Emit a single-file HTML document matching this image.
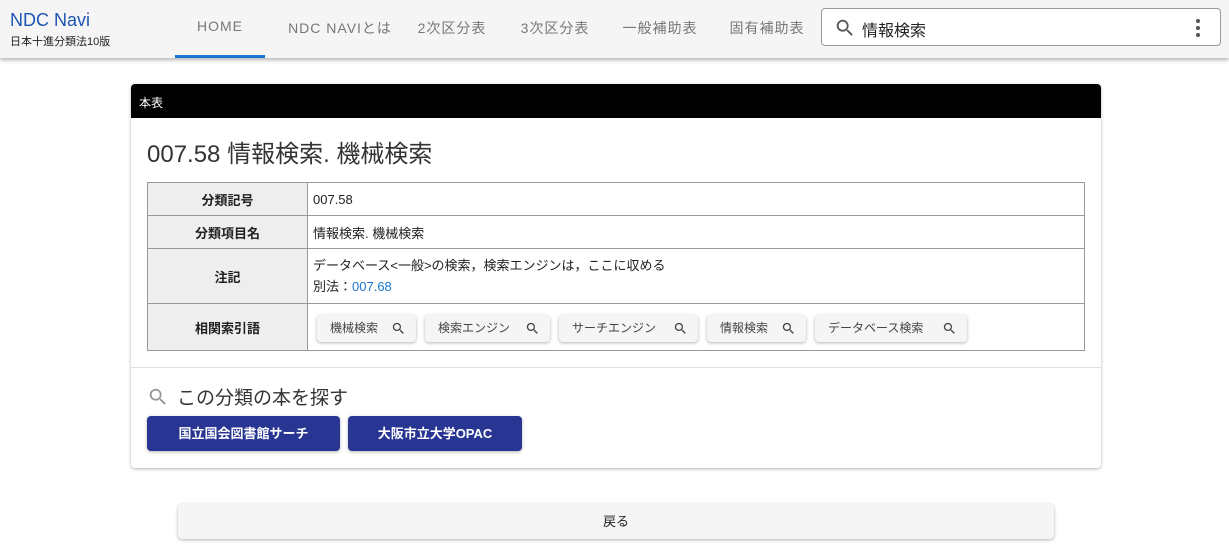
<!DOCTYPE html><html><head><meta charset="utf-8"><style>
*{box-sizing:border-box;margin:0;padding:0}
body{width:1229px;height:548px;background:#fff;font-family:"Liberation Sans","Noto Sans CJK JP",sans-serif;color:#212121;position:relative;overflow:hidden}
.hdr{position:absolute;left:0;top:0;width:1229px;height:58px;background:#f5f5f5;box-shadow:0 2px 4px rgba(0,0,0,.3)}
.logo{position:absolute;left:10px;top:10px;color:#1e56b3;font-size:18px}
.sub{position:absolute;left:10px;top:33px;font-size:11px;color:#222}
.nav{position:absolute;top:18px;font-size:14px;color:#777;letter-spacing:1px;transform:translateX(-50%);white-space:nowrap}
.ul{position:absolute;left:175px;top:55px;width:90px;height:3px;background:#1976d2}
.srch{position:absolute;left:821px;top:8px;width:400px;height:38px;border:1px solid #999;border-radius:4px;background:#fff}
.card{position:absolute;left:131px;top:84px;width:970px;height:384px;background:#fff;border-radius:4px;box-shadow:0 1px 3px rgba(0,0,0,.3);overflow:hidden}
.ch{height:34px;background:#000;color:#fff;font-size:12px;padding:10px 8px}
h1{position:absolute;left:16px;top:50px;font-size:24px;font-weight:normal;color:#333}
table{position:absolute;left:16px;top:98px;width:938px;border-collapse:collapse;font-size:13px}
td{border:1px solid #999;padding:0 5px}
td.l{width:160px;background:#eee;font-weight:bold;text-align:center}
.chip{position:absolute;top:11px;height:27px;line-height:27px;padding-left:13px;background:#f5f5f5;border-radius:4px;box-shadow:0 1px 3px rgba(0,0,0,.3);font-size:12px;color:#444}
.chip svg{position:absolute;right:10px;top:6px}
.hr{position:absolute;left:0;top:283px;width:970px;height:1px;background:#e0e0e0}
.btn{position:absolute;top:332px;height:35px;line-height:35px;background:#283593;color:#fff;font-weight:bold;font-size:13px;text-align:center;border-radius:4px;box-shadow:0 1px 3px rgba(0,0,0,.3)}
.back{position:absolute;left:178px;top:504px;width:876px;height:35px;line-height:35px;text-align:center;background:#f5f5f5;border-radius:4px;box-shadow:0 1px 3px rgba(0,0,0,.3);font-size:13px}
</style></head><body>
<div class="hdr">
<div class="logo">NDC Navi</div><div class="sub">日本十進分類法10版</div>
<div class="nav" style="left:220px">HOME</div>
<div class="nav" style="left:340px">NDC NAVIとは</div>
<div class="nav" style="left:452px">2次区分表</div>
<div class="nav" style="left:555px">3次区分表</div>
<div class="nav" style="left:660px">一般補助表</div>
<div class="nav" style="left:767px">固有補助表</div>
<div class="ul"></div>
<div class="srch">
<svg style="position:absolute;left:12px;top:8px" width="22" height="22" viewBox="0 0 24 24"><path fill="#555" d="M15.5 14h-.8l-.3-.3A6.5 6.5 0 1 0 9.5 16a6.5 6.5 0 0 0 4.2-1.6l.3.3v.8l5 5 1.5-1.5-5-5zm-6 0a4.5 4.5 0 1 1 0-9 4.5 4.5 0 0 1 0 9z"/></svg>
<span style="position:absolute;left:40px;top:8px;font-size:16px">情報検索</span>
<svg style="position:absolute;left:372px;top:8px" width="8" height="22" viewBox="0 0 8 22"><circle cx="4" cy="4" r="2" fill="#555"/><circle cx="4" cy="11" r="2" fill="#555"/><circle cx="4" cy="18" r="2" fill="#555"/></svg>
</div></div>
<div class="card">
<div class="ch">本表</div>
<h1>007.58 情報検索. 機械検索</h1>
<table>
<tr style="height:33px"><td class="l">分類記号</td><td>007.58</td></tr>
<tr style="height:33px"><td class="l">分類項目名</td><td>情報検索. 機械検索</td></tr>
<tr style="height:55px"><td class="l">注記</td><td style="line-height:21px">データベース&lt;一般&gt;の検索，検索エンジンは，ここに収める<br>別法：<span style="color:#1976d2">007.68</span></td></tr>
<tr style="height:47px"><td class="l">相関索引語</td><td style="position:relative">
<span class="chip" style="left:9px;width:99px">機械検索<svg width="15" height="15" viewBox="0 0 24 24"><path fill="#444" d="M15.5 14h-.8l-.3-.3A6.5 6.5 0 1 0 9.5 16a6.5 6.5 0 0 0 4.2-1.6l.3.3v.8l5 5 1.5-1.5-5-5zm-6 0a4.5 4.5 0 1 1 0-9 4.5 4.5 0 0 1 0 9z"/></svg></span>
<span class="chip" style="left:117px;width:125px">検索エンジン<svg width="15" height="15" viewBox="0 0 24 24"><path fill="#444" d="M15.5 14h-.8l-.3-.3A6.5 6.5 0 1 0 9.5 16a6.5 6.5 0 0 0 4.2-1.6l.3.3v.8l5 5 1.5-1.5-5-5zm-6 0a4.5 4.5 0 1 1 0-9 4.5 4.5 0 0 1 0 9z"/></svg></span>
<span class="chip" style="left:251px;width:139px">サーチエンジン<svg width="15" height="15" viewBox="0 0 24 24"><path fill="#444" d="M15.5 14h-.8l-.3-.3A6.5 6.5 0 1 0 9.5 16a6.5 6.5 0 0 0 4.2-1.6l.3.3v.8l5 5 1.5-1.5-5-5zm-6 0a4.5 4.5 0 1 1 0-9 4.5 4.5 0 0 1 0 9z"/></svg></span>
<span class="chip" style="left:399px;width:99px">情報検索<svg width="15" height="15" viewBox="0 0 24 24"><path fill="#444" d="M15.5 14h-.8l-.3-.3A6.5 6.5 0 1 0 9.5 16a6.5 6.5 0 0 0 4.2-1.6l.3.3v.8l5 5 1.5-1.5-5-5zm-6 0a4.5 4.5 0 1 1 0-9 4.5 4.5 0 0 1 0 9z"/></svg></span>
<span class="chip" style="left:507px;width:152px">データベース検索<svg width="15" height="15" viewBox="0 0 24 24"><path fill="#444" d="M15.5 14h-.8l-.3-.3A6.5 6.5 0 1 0 9.5 16a6.5 6.5 0 0 0 4.2-1.6l.3.3v.8l5 5 1.5-1.5-5-5zm-6 0a4.5 4.5 0 1 1 0-9 4.5 4.5 0 0 1 0 9z"/></svg></span>
</td></tr>
</table>
<div class="hr"></div>
<svg style="position:absolute;left:16px;top:302px" width="22" height="22" viewBox="0 0 24 24"><path fill="#999" d="M15.5 14h-.8l-.3-.3A6.5 6.5 0 1 0 9.5 16a6.5 6.5 0 0 0 4.2-1.6l.3.3v.8l5 5 1.5-1.5-5-5zm-6 0a4.5 4.5 0 1 1 0-9 4.5 4.5 0 0 1 0 9z"/></svg>
<div style="position:absolute;left:46px;top:299px;font-size:19px;color:#333">この分類の本を探す</div>
<div class="btn" style="left:16px;width:193px">国立国会図書館サーチ</div>
<div class="btn" style="left:217px;width:174px">大阪市立大学OPAC</div>
</div>
<div class="back">戻る</div>
</body></html>
